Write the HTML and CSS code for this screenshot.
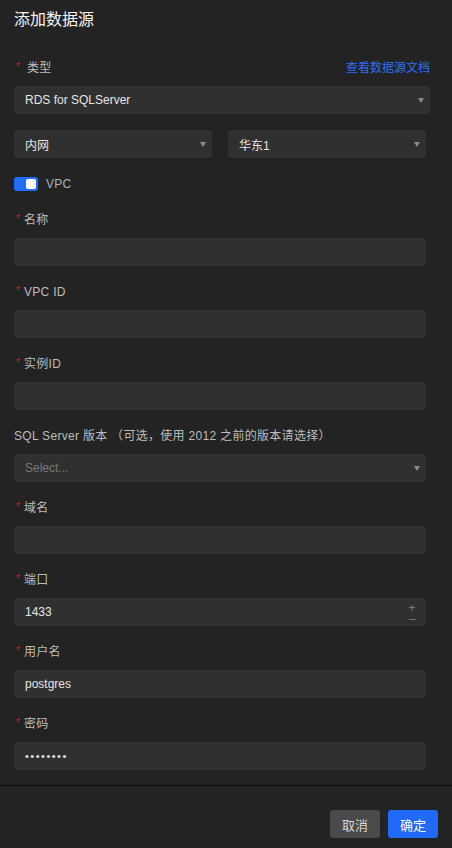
FILE: index.html
```html
<!DOCTYPE html>
<html lang="zh">
<head>
<meta charset="utf-8">
<title>添加数据源</title>
<link rel="stylesheet" href="styles.css">
</head>
<body>
<div class="dialog">
  <div class="header">添加数据源</div>
  <div class="form">
    <div class="label-row">
      <div class="label"><span class="req spaced">*</span>类型</div>
      <a class="doc-link">查看数据源文档</a>
    </div>
    <div class="control select wide"><span class="value">RDS for SQLServer</span><i class="arrow"></i></div>

    <div class="split">
      <div class="control select"><span class="value">内网</span><i class="arrow"></i></div>
      <div class="control select"><span class="value">华东1</span><i class="arrow"></i></div>
    </div>

    <div class="switch-row">
      <span class="switch"><span class="knob"></span></span>
      <span class="switch-label">VPC</span>
    </div>

    <div class="field">
      <div class="label"><span class="req">*</span>名称</div>
      <div class="control"></div>
    </div>
    <div class="field">
      <div class="label"><span class="req">*</span>VPC ID</div>
      <div class="control"></div>
    </div>
    <div class="field">
      <div class="label"><span class="req">*</span>实例ID</div>
      <div class="control"></div>
    </div>
    <div class="field">
      <div class="label">SQL Server 版本 （可选，使用 2012 之前的版本请选择）</div>
      <div class="control select"><span class="placeholder">Select...</span><i class="arrow"></i></div>
    </div>
    <div class="field">
      <div class="label"><span class="req">*</span>域名</div>
      <div class="control"></div>
    </div>
    <div class="field">
      <div class="label"><span class="req">*</span>端口</div>
      <div class="control number"><span class="value">1433</span>
        <span class="stepper"><span class="plus">+</span><span class="minus"></span></span>
      </div>
    </div>
    <div class="field">
      <div class="label"><span class="req">*</span>用户名</div>
      <div class="control"><span class="value">postgres</span></div>
    </div>
    <div class="field last">
      <div class="label"><span class="req">*</span>密码</div>
      <div class="control"><span class="value dots">••••••••</span></div>
    </div>
  </div>
  <div class="footer">
    <button class="btn cancel">取消</button>
    <button class="btn primary">确定</button>
  </div>
</div>
</body>
</html>
```

FILE: styles.css
```css
html, body {
  margin: 0;
  padding: 0;
  background: #232323;
}
body {
  font-family: "Liberation Sans", "Noto Sans CJK SC", sans-serif;
  font-size: 12px;
  color: #c4c4c4;
  width: 452px;
  height: 848px;
  overflow: hidden;
}
.dialog {
  display: flex;
  flex-direction: column;
  height: 848px;
}
.header {
  padding: 8px 14px 0;
  line-height: 24px;
  font-size: 16px;
  color: #f4f4f4;
}
.form {
  margin-top: 26px;
  padding: 0 26px 0 14px;
  display: flex;
  flex-direction: column;
}
.label-row {
  display: flex;
  justify-content: space-between;
  align-items: center;
  margin-right: -4px;
  margin-bottom: 8px;
}
.label {
  line-height: 20px;
  height: 20px;
  color: #bdbdbd;
  white-space: nowrap;
  letter-spacing: 0.3px;
}
.field .label {
  margin-bottom: 8px;
}
.req {
  display: inline-block;
  color: #b3282d;
  font-size: 11px;
  margin-left: 2px;
  width: 8px;
  position: relative;
  top: -2px;
}
.req.spaced {
  width: 11px;
}
.doc-link {
  color: #2f6ef4;
  line-height: 20px;
  cursor: pointer;
}
.control {
  height: 28px;
  background: #303030;
  border-radius: 3px;
  display: flex;
  align-items: center;
  padding: 0 6px 0 11px;
  box-sizing: border-box;
  position: relative;
  color: #e6e6e6;
}
.control.wide {
  margin-right: -4px;
}
.value {
  flex: 1;
}
.placeholder {
  flex: 1;
  color: #777;
}
.arrow {
  width: 0;
  height: 0;
  border-left: 3.5px solid transparent;
  border-right: 3.5px solid transparent;
  border-top: 5px solid #8a8a8a;
  margin-top: 1px;
}
.split {
  display: grid;
  grid-template-columns: 1fr 1fr;
  column-gap: 16px;
  margin-top: 16px;
}
.switch-row {
  display: flex;
  align-items: center;
  height: 20px;
  margin-top: 16px;
  margin-bottom: 16px;
}
.switch {
  width: 24px;
  height: 14px;
  background: #1f6cff;
  border-radius: 3px;
  position: relative;
  display: inline-block;
}
.knob {
  position: absolute;
  right: 2px;
  top: 2px;
  width: 10px;
  height: 10px;
  border-radius: 2px;
  background: #fafafa;
}
.switch-label {
  margin-left: 8px;
  color: #a9b0b8;
  letter-spacing: 0.3px;
}
.field {
  margin-bottom: 16px;
}
.field.last {
  margin-bottom: 0;
}
.number {
  padding-right: 10px;
}
.stepper {
  display: flex;
  flex-direction: column;
  align-items: center;
  width: 8px;
}
.plus {
  color: #7a7a7a;
  font-size: 12px;
  line-height: 12px;
  height: 12px;
  margin-top: -2px;
}
.minus {
  width: 7px;
  height: 1px;
  background: #6e6e6e;
  margin-top: 5px;
}
.dots {
  letter-spacing: 1.5px;
  font-size: 11px;
  color: #e0e0e0;
}
.footer {
  margin-top: 15px;
  border-top: 1px solid #0c0c0c;
  padding: 24px 14px 0;
  display: flex;
  justify-content: flex-end;
  gap: 8px;
}
.btn {
  width: 50px;
  height: 28px;
  border: none;
  border-radius: 3px;
  font-family: "Liberation Sans", "Noto Sans CJK SC", sans-serif;
  font-size: 13px;
  padding: 0;
  cursor: pointer;
}
.cancel {
  background: #4a4a4a;
  color: #d8d8d8;
}
.primary {
  background: #206af7;
  color: #ffffff;
}
```
